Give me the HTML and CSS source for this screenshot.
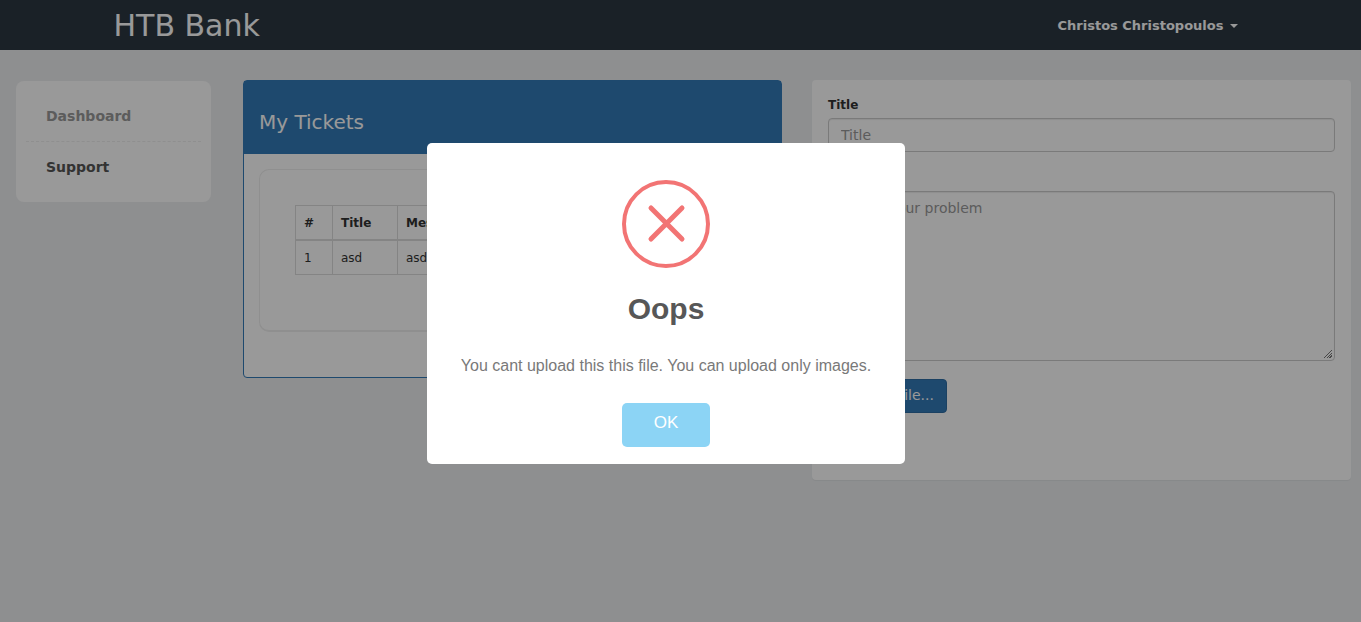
FILE: index.html
```html
<!DOCTYPE html>
<html lang="en">
<head>
<meta charset="utf-8">
<title>HTB Bank - Support</title>
<link rel="stylesheet" href="styles.css">
</head>
<body>
<header class="header">
  <div class="header-inner">
    <h1 class="logo"><a href="#">HTB Bank</a></h1>
    <button class="account" type="button">Christos Christopoulos<span class="caret"></span></button>
  </div>
</header>

<main class="page">
  <nav class="sidebar">
    <ul class="menu">
      <li class="menu-item"><a class="menu-link" href="#">Dashboard</a></li>
      <li class="menu-item"><a class="menu-link current" href="#">Support</a></li>
    </ul>
  </nav>

  <section class="panel">
    <h2 class="panel-heading">My Tickets</h2>
    <div class="panel-body">
      <div class="box">
        <table class="tickets">
          <thead><tr><th class="col-id">#</th><th class="col-title">Title</th><th>Message</th></tr></thead>
          <tbody><tr><td>1</td><td>asd</td><td>asd</td></tr></tbody>
        </table>
      </div>
    </div>
  </section>

  <form class="ticket-form">
    <div class="field">
      <label class="label" for="title">Title</label>
      <input class="control" id="title" type="text" placeholder="Title">
    </div>
    <div class="field">
      <label class="label" for="message">Message</label>
      <textarea class="control area" id="message" placeholder="Tell us your problem"></textarea>
    </div>
    <button class="file-button" type="button">Choose File...</button>
  </form>
</main>

<div class="overlay">
  <div class="alert" role="alertdialog" aria-modal="true" aria-labelledby="alert-title" aria-describedby="alert-text">
    <svg class="alert-icon" viewBox="0 0 88 88" fill="none" stroke="#f27474" aria-hidden="true">
      <circle cx="44" cy="44" r="42" stroke-width="4"/>
      <path d="M29 28L60 59M60 28L29 59" stroke-width="5" stroke-linecap="round"/>
    </svg>
    <h2 class="alert-title" id="alert-title">Oops</h2>
    <p class="alert-text" id="alert-text">You cant upload this this file. You can upload only images.</p>
    <button class="alert-ok" type="button">OK</button>
  </div>
</div>
</body>
</html>
```

FILE: styles.css
```css
* {
  box-sizing: border-box;
}

body {
  margin: 0;
  min-height: 100vh;
  background: #edeff1;
  color: #333;
  font: 14px/20px "DejaVu Sans", sans-serif;
}

h1, h2, p, ul {
  margin: 0;
  padding: 0;
}

a {
  text-decoration: none;
}

button {
  font: inherit;
  cursor: pointer;
}

.header {
  background: #2c3742;
}

.header-inner {
  display: flex;
  align-items: center;
  justify-content: space-between;
  height: 50px;
  max-width: 1134px;
  margin: 0 auto;
  padding: 2px 10px 0 0;
}

.logo {
  font-size: 30px;
  line-height: 38px;
  font-weight: normal;
}

.logo a {
  color: #fff;
}

.account {
  display: flex;
  align-items: center;
  gap: 6px;
  padding: 0;
  border: 0;
  background: none;
  color: #fff;
  font-size: 13px;
  font-weight: bold;
}

.caret {
  border: 4px solid transparent;
  border-top-color: #fff;
  border-bottom: 0;
}

.page {
  display: grid;
  grid-template-columns: 197px 1fr 1fr;
  column-gap: 30px;
  align-items: start;
  padding: 30px 10px 30px 16px;
}

.sidebar {
  margin: 1px 2px 0 0;
  padding: 10px;
  border-radius: 8px;
  background: #fff;
}

.menu {
  list-style: none;
}

.menu-item + .menu-item {
  border-top: 1px dashed #eee;
}

.menu-link {
  display: block;
  padding: 15px 20px;
  color: #999;
  font-weight: bold;
}

.current {
  color: #555;
}

.panel {
  border: 1px solid #337ab7;
  border-radius: 4px;
  background: #fff;
}

.panel-heading {
  padding: 30px 15px 21px;
  background: #337ab7;
  color: #fff;
  font-size: 20px;
  line-height: 22px;
  font-weight: normal;
}

.panel-body {
  padding: 15px 15px 45px;
}

.box {
  height: 163px;
  padding: 35px;
  border: 1px solid #eee;
  border-bottom-width: 2px;
  border-radius: 10px;
}

.tickets {
  width: 100%;
  border-collapse: collapse;
  font-size: 12px;
  line-height: 17px;
}

.tickets th,
.tickets td {
  padding: 9px 8px 7px;
  border: 1px solid #ddd;
  text-align: left;
}

.tickets th {
  border-bottom-width: 2px;
}

.col-id {
  width: 37px;
}

.col-title {
  width: 65px;
}

.ticket-form {
  min-height: 400px;
  padding: 15px 16px;
  border-radius: 4px;
  background: #fff;
  box-shadow: 0 1px 1px rgba(0, 0, 0, 0.05);
}

.field {
  margin-bottom: 16px;
}

.label {
  display: block;
  margin-bottom: 3px;
  font-size: 12px;
  font-weight: bold;
}

.control {
  display: block;
  width: 100%;
  height: 34px;
  padding: 6px 12px;
  border: 1px solid #ccc;
  border-radius: 4px;
  background: #fff;
  box-shadow: inset 0 1px 1px rgba(0, 0, 0, 0.075);
  color: #555;
  font: inherit;
}

.control::placeholder {
  color: #999;
}

.area {
  height: 170px;
  resize: vertical;
}

.area::-webkit-resizer {
  background:
    linear-gradient(135deg, #fff 50%, transparent 50%) 3px 3px / 10px 10px no-repeat,
    repeating-linear-gradient(135deg, #777 0 1px, #fff 1px 2px) 3px 3px / 10px 10px no-repeat;
}

.file-button {
  margin-top: 2px;
  padding: 5px 12px 7px;
  border: 1px solid #2e6da4;
  border-radius: 4px;
  background: #337ab7;
  color: #fff;
}

.overlay {
  position: fixed;
  inset: 0;
  display: flex;
  align-items: center;
  justify-content: center;
  padding: 0 29px 15px 0;
  background: rgba(0, 0, 0, 0.4);
}

.alert {
  display: flex;
  flex-direction: column;
  align-items: center;
  width: 478px;
  padding: 37px 17px 17px;
  border-radius: 5px;
  background: #fff;
  font-family: "Liberation Sans", Arial, sans-serif;
  text-align: center;
}

.alert-icon {
  width: 88px;
  height: 88px;
}

.alert-title {
  margin: 21px 0 26px;
  color: #575757;
  font-size: 30px;
  line-height: 40px;
}

.alert-text {
  color: #797979;
  font-size: 16px;
  line-height: 22px;
}

.alert-ok {
  width: 88px;
  height: 44px;
  margin-top: 26px;
  padding: 0 0 4px;
  border: 0;
  border-radius: 5px;
  background: #8cd4f5;
  color: #fff;
  font-size: 17px;
}
```
